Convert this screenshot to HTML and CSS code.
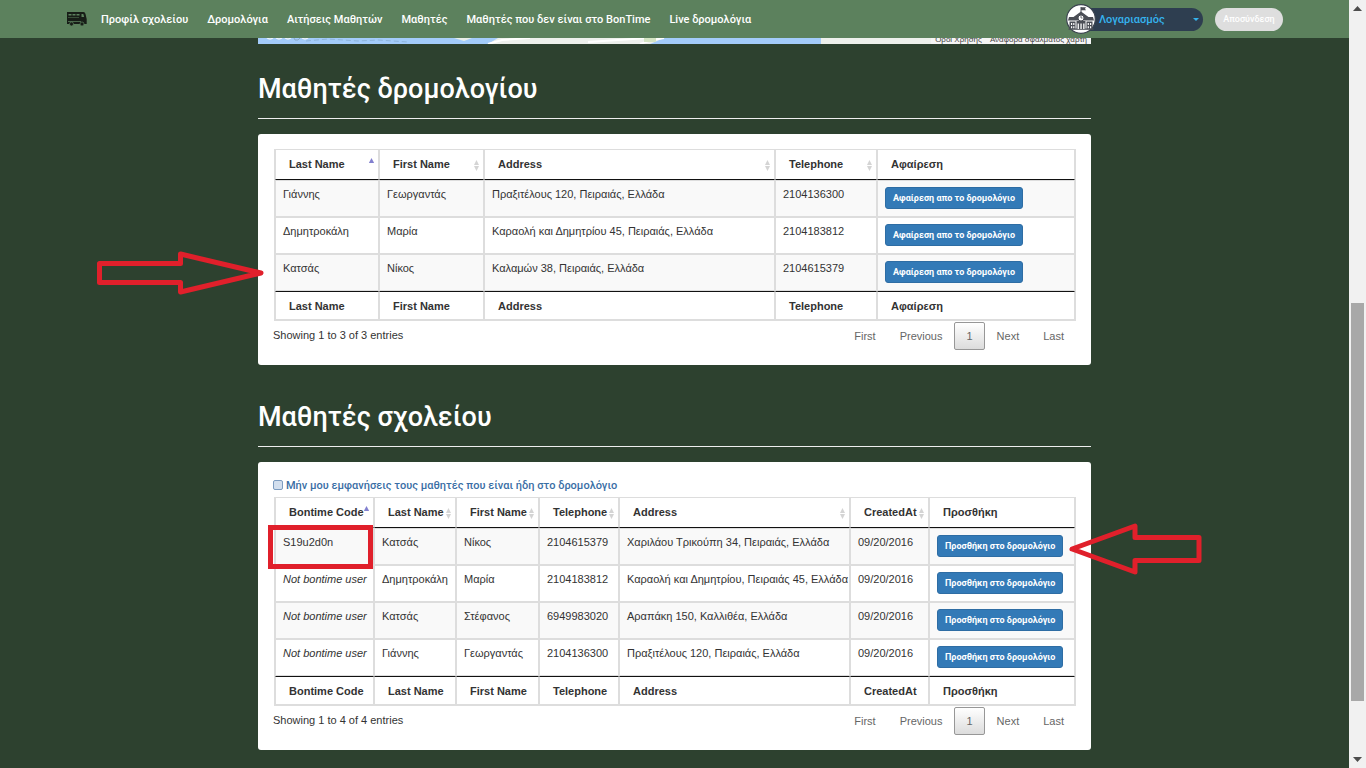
FILE: index.html
```
<!DOCTYPE html>
<html lang="el">
<head>
<meta charset="utf-8">
<title>BonTime</title>
<link rel="stylesheet" href="styles.css">
</head>
<body>
<svg class="defs" aria-hidden="true">
  <symbol id="both" viewBox="0 0 5 11"><path d="M2.500 0 5 5H0zM2.500 11 0 6h5z" fill="#d4d4d4"/></symbol>
  <symbol id="asc" viewBox="0 0 5 11"><path d="M2.500 1 5.200 6H-.2z" fill="#8280cf"/></symbol>
</svg>

<div class="window">
  <div class="page">
    <nav class="navbar">
      <a class="brand" href="#" aria-label="BonTime">
        <svg width="22" height="16" viewBox="0 0 22 16">
          <path d="M1 1h16.500q1.500 0 2 2l1.200 5v5H1z" fill="#171d17"/>
          <path d="M2.500 3h3v1.500h-3zM6.500 3h3v1.500h-3zM10.500 3h3v1.500h-3zM15.500 3h1.800l.9 3h-2.700zM2 6.500h11v.6H2zM2 10h13v.8H2z" fill="#5c815d"/>
          <circle cx="5.500" cy="13" r="2" fill="#171d17" stroke="#5c815d" stroke-width=".7"/>
          <circle cx="16" cy="13" r="2" fill="#171d17" stroke="#5c815d" stroke-width=".7"/>
        </svg>
      </a>
      <a href="#">Προφίλ σχολείου</a>
      <a href="#">Δρομολόγια</a>
      <a href="#">Αιτήσεις Μαθητών</a>
      <a href="#">Μαθητές</a>
      <a href="#">Μαθητές που δεν είναι στο BonTime</a>
      <a href="#">Live δρομολόγια</a>
      <div class="account">
        <button class="profile" type="button">
          <svg class="avatar" width="30" height="30" viewBox="0 0 30 30">
            <circle cx="15" cy="15" r="14.300" fill="#fff" stroke="#3c4450" stroke-width="1.200"/>
            <g fill="#4b4e56">
              <path d="M14.500 3h1v6h-1zM15.500 3.200h4.500l-1 1.500 1 1.500h-4.500z"/>
              <path d="M15 7.500 22.500 13H27l1 3.500H2L3 13h4.500z"/>
              <path d="M3.500 17.500h6V25h-6zM20.500 17.500h6V25h-6zM10.500 17h9v8h-9z"/>
              <path d="M2.500 24.500h25v1.300h-25z"/>
            </g>
            <circle cx="15" cy="14" r="3" fill="#fff" stroke="#4b4e56"/>
            <path d="M15 12v2h1.500" fill="none" stroke="#4b4e56" stroke-width=".8"/>
            <path d="M5 19h1.200v2H5zM7.200 19h1.200v2H7.200zM5 22.200h1.200v2H5zM7.200 22.200h1.200v2H7.200zM21.700 19h1.200v2h-1.200zM24 19h1.200v2H24zM21.700 22.200h1.200v2h-1.200zM24 22.200h1.200v2H24zM11.600 19.500h1.300V25h-1.300zM14.400 19.500h1.300V25h-1.300zM17.200 19.500h1.300V25h-1.300z" fill="#fff"/>
          </svg>
          <span>Λογαριασμός</span>
          <svg class="caret" width="6" height="3" viewBox="0 0 6 3"><path d="M0 0h6L3 3z" fill="#35b3ee"/></svg>
        </button>
        <button class="logout" type="button">Αποσύνδεση</button>
      </div>
    </nav>

    <main class="content">
      <div class="map">
        <svg class="map-tiles" viewBox="0 0 833 6" preserveAspectRatio="none" aria-hidden="true">
          <path d="M0 0h833v6H0z" fill="#a3ccfa"/>
          <path d="M240 0h166l-14 6H230zM563 0h270v6H563z" fill="#edf0ec"/>
          <path d="M196 0h18l-8 3z" fill="#e9efe9"/>
          <path d="M230 6l14-4 28-2M330 4l60-4M382 6l12-4 12-2" fill="none" stroke="#fff" stroke-width="2"/>
          <path d="M386 0h12v4h-12z" fill="#d4e4c3"/>
          <path d="M9 0q3 2 6 0M18 0q3 2 6 0M27 0q3 2 6 0M44 0q3 2 6 0" fill="none" stroke="#eef5fd" stroke-width="1.500"/>
          <path d="M36 0q0 3 4 2l2-2" fill="none" stroke="#8aa7c8"/>
          <path d="M48 3l22-2 30 2 20-1 30 2" fill="none" stroke="#8db4dc" stroke-dasharray="5 3"/>
        </svg>
        <div class="map-links"><a href="#">Όροι Χρήσης</a><a href="#">Αναφορά σφάλματος χάρτη</a></div>
      </div>

      <section>
        <h2>Μαθητές δρομολογίου</h2>
        <div class="card">
          <table class="grid">
            <colgroup><col style="width:13%"><col style="width:13.125%"><col style="width:36.375%"><col style="width:12.75%"><col></colgroup>
            <thead><tr>
              <th><button type="button">Last Name<svg class="asc"><use href="#asc"/></svg></button></th>
              <th><button type="button">First Name<svg><use href="#both"/></svg></button></th>
              <th><button type="button">Address<svg><use href="#both"/></svg></button></th>
              <th><button type="button">Telephone<svg><use href="#both"/></svg></button></th>
              <th>Αφαίρεση</th>
            </tr></thead>
            <tbody>
              <tr><td>Γιάννης</td><td>Γεωργαντάς</td><td>Πραξιτέλους 120, Πειραιάς, Ελλάδα</td><td>2104136300</td><td><button class="btn" type="button">Αφαίρεση απο το δρομολόγιο</button></td></tr>
              <tr><td>Δημητροκάλη</td><td>Μαρία</td><td>Καραολή και Δημητρίου 45, Πειραιάς, Ελλάδα</td><td>2104183812</td><td><button class="btn" type="button">Αφαίρεση απο το δρομολόγιο</button></td></tr>
              <tr><td>Κατσάς</td><td>Νίκος</td><td>Καλαμών 38, Πειραιάς, Ελλάδα</td><td>2104615379</td><td><button class="btn" type="button">Αφαίρεση απο το δρομολόγιο</button></td></tr>
            </tbody>
            <tfoot><tr><th>Last Name</th><th>First Name</th><th>Address</th><th>Telephone</th><th>Αφαίρεση</th></tr></tfoot>
          </table>
          <div class="table-foot">
            <p>Showing 1 to 3 of 3 entries</p>
            <div class="pager"><button type="button">First</button><button type="button">Previous</button><button class="current" type="button">1</button><button type="button">Next</button><button type="button">Last</button></div>
          </div>
          <svg class="arrow arrow-right" width="172" height="46" viewBox="0 0 172 46" aria-hidden="true"><path d="M4.500 13.500h81V4L166 23 85.500 42v-9.500h-81z"/></svg>
        </div>
      </section>

      <section>
        <h2>Μαθητές σχολείου</h2>
        <div class="card">
          <label class="filter"><input type="checkbox">Μήν μου εμφανήσεις τους μαθητές που είναι ήδη στο δρομολόγιο</label>
          <table class="grid">
            <colgroup><col style="width:12.375%"><col style="width:10.25%"><col style="width:10.375%"><col style="width:10%"><col style="width:28.875%"><col style="width:9.875%"><col></colgroup>
            <thead><tr>
              <th><button type="button">Bontime Code<svg class="asc"><use href="#asc"/></svg></button></th>
              <th><button type="button">Last Name<svg><use href="#both"/></svg></button></th>
              <th><button type="button">First Name<svg><use href="#both"/></svg></button></th>
              <th><button type="button">Telephone<svg><use href="#both"/></svg></button></th>
              <th><button type="button">Address<svg><use href="#both"/></svg></button></th>
              <th><button type="button">CreatedAt<svg><use href="#both"/></svg></button></th>
              <th>Προσθήκη</th>
            </tr></thead>
            <tbody>
              <tr><td class="marked">S19u2d0n</td><td>Κατσάς</td><td>Νίκος</td><td>2104615379</td><td>Χαριλάου Τρικούπη 34, Πειραιάς, Ελλάδα</td><td>09/20/2016</td><td><button class="btn" type="button">Προσθήκη στο δρομολόγιο</button></td></tr>
              <tr><td><em>Not bontime user</em></td><td>Δημητροκάλη</td><td>Μαρία</td><td>2104183812</td><td>Καραολή και Δημητρίου, Πειραιάς 45, Ελλάδα</td><td>09/20/2016</td><td><button class="btn" type="button">Προσθήκη στο δρομολόγιο</button></td></tr>
              <tr><td><em>Not bontime user</em></td><td>Κατσάς</td><td>Στέφανος</td><td>6949983020</td><td>Αραπάκη 150, Καλλιθέα, Ελλάδα</td><td>09/20/2016</td><td><button class="btn" type="button">Προσθήκη στο δρομολόγιο</button></td></tr>
              <tr><td><em>Not bontime user</em></td><td>Γιάννης</td><td>Γεωργαντάς</td><td>2104136300</td><td>Πραξιτέλους 120, Πειραιάς, Ελλάδα</td><td>09/20/2016</td><td><button class="btn" type="button">Προσθήκη στο δρομολόγιο</button></td></tr>
            </tbody>
            <tfoot><tr><th>Bontime Code</th><th>Last Name</th><th>First Name</th><th>Telephone</th><th>Address</th><th>CreatedAt</th><th>Προσθήκη</th></tr></tfoot>
          </table>
          <div class="table-foot">
            <p>Showing 1 to 4 of 4 entries</p>
            <div class="pager"><button type="button">First</button><button type="button">Previous</button><button class="current" type="button">1</button><button type="button">Next</button><button type="button">Last</button></div>
          </div>
          <svg class="arrow arrow-left" width="136" height="54" viewBox="0 0 136 54" aria-hidden="true"><path d="M5 27 68 4v11.500h64v23H68V50z"/></svg>
        </div>
      </section>
    </main>
  </div>

  <div class="scrollbar" aria-hidden="true">
    <svg width="9" height="5" viewBox="0 0 9 5"><path d="M4.500 0 9 5H0z" fill="#4d4d4d"/></svg>
    <div class="track"><div class="before"></div><div class="thumb"></div><div class="after"></div></div>
    <svg width="9" height="5" viewBox="0 0 9 5"><path d="M0 0h9L4.500 5z" fill="#4d4d4d"/></svg>
  </div>
</div>
</body>
</html>
```
FILE: styles.css
```
* { box-sizing: border-box; }
body {
  margin: 0;
  background: #2d412f;
  color: #333;
  font: 11px/15px "Liberation Sans", Arial, sans-serif;
}
button { font: inherit; color: inherit; margin: 0; cursor: pointer; }
.defs { position: absolute; width: 0; height: 0; }

.window { display: flex; height: 100vh; overflow: hidden; }
.page { flex: 1; min-width: 0; }

/* navigation */
.navbar {
  display: flex;
  align-items: center;
  gap: 19px;
  height: 38px;
  padding: 0 66px;
  background: #5c815d;
  color: #fff;
  font: 500 11px/15px Roboto, sans-serif;
  white-space: nowrap;
}
.navbar a { color: #fff; text-decoration: none; }
.navbar .brand { display: flex; margin-right: -6px; }
.account { display: flex; align-items: center; gap: 12px; margin-left: auto; }
.profile {
  display: flex;
  align-items: center;
  width: 136px;
  height: 23px;
  padding: 0 4px 0 0;
  border: 0;
  border-radius: 12px;
  background: #2e3e50;
  color: #35b3ee;
}
.avatar { flex: none; margin: -4px 3px -4px -1px; }
.caret { margin-left: auto; }
.logout {
  width: 68px;
  height: 23px;
  padding: 0;
  border: 0;
  border-radius: 12px;
  background: #dedede;
  color: #fff;
  font-size: 9px;
}

/* content */
.content { width: 100%; max-width: 833px; margin: 0 auto; }
.map {
  display: flex;
  justify-content: flex-end;
  position: relative;
  height: 6px;
  margin-bottom: 31px;
  overflow: hidden;
}
.map-tiles { position: absolute; inset: 0; width: 100%; height: 100%; }
.map-links {
  display: flex;
  align-items: flex-end;
  gap: 8px;
  height: 6px;
  padding: 0 4px;
  background: #f5f5f5;
  position: relative;
  font: 8px/9px "Liberation Sans", Arial, sans-serif;
}
.map-links a { color: #444; text-decoration: none; }
h2 {
  margin: 0 0 15px;
  padding-bottom: 14px;
  border-bottom: 1px solid #eee;
  color: #fff;
  font: 500 27px/29px Roboto, sans-serif;
}
.card {
  position: relative;
  margin-bottom: 38px;
  padding: 15px;
  border-radius: 3px;
  background: #fff;
}
.filter {
  display: flex;
  align-items: center;
  gap: 3px;
  height: 20px;
  padding-bottom: 4px;
  color: #3a6ea5;
  font: 500 11px/15px Roboto, sans-serif;
}
.filter input {
  appearance: none;
  width: 10px;
  height: 10px;
  margin: 0;
  border: 1px solid #7d9cc0;
  border-radius: 2px;
  background: #d3dfee;
}

/* tables */
.grid {
  width: calc(100% - 1px);
  margin-left: 1px;
  table-layout: fixed;
  border-collapse: separate;
  border-spacing: 0;
  border: 1px solid #ddd;
  border-top: 0;
}
.grid th, .grid td {
  padding: 6px 7px;
  border: 1px solid #ddd;
  text-align: left;
  vertical-align: top;
  white-space: nowrap;
}
.grid th { padding: 7px 4px 7px 13px; color: #333; font-weight: 700; }
.grid thead th { border-bottom-color: #111; }
.grid tfoot th { padding-bottom: 5px; border-top-color: #111; }
.grid td { height: 37px; }
.grid tbody tr:nth-child(odd) { background: #f9f9f9; }
.grid th button {
  display: flex;
  justify-content: space-between;
  width: 100%;
  padding: 0;
  border: 0;
  background: none;
}
.grid svg { flex: none; width: 5px; height: 11px; margin-top: 3px; }
.grid .asc { margin-top: 0; }
.btn {
  display: block;
  height: 22px;
  padding: 0 7px;
  border: 1px solid #2e6da4;
  border-radius: 3px;
  background: #337ab7;
  color: #fff;
  font: 700 9px/20px Roboto, sans-serif;
}
.marked { position: relative; }
.marked::after {
  content: "";
  position: absolute;
  inset: -4px 0 -5px -8px;
  border: 5px solid #e0202b;
}
.table-foot { display: flex; justify-content: space-between; padding-top: 1px; }
.table-foot p { margin: 6px 0 0; }
.pager { display: flex; }
.pager button {
  height: 28px;
  padding: 0 11px;
  border: 1px solid transparent;
  border-radius: 2px;
  background: none;
  color: #666;
}
.pager .current {
  border-color: #979797;
  background: linear-gradient(#fff, #dcdcdc);
}

/* callouts */
.arrow { position: absolute; pointer-events: none; }
.arrow path { fill: none; stroke: #e0202b; stroke-width: 5; stroke-linejoin: round; }
.arrow-right { right: 824px; top: 116px; }
.arrow-left { left: 809px; top: 60px; }

/* scrollbar */
.scrollbar {
  display: flex;
  flex-direction: column;
  align-items: center;
  width: 17px;
  padding: 6px 0;
  background: #f1f1f1;
}
.track { display: flex; flex: 1; flex-direction: column; width: 13px; margin: 6px 0; }
.before { flex: 286; }
.thumb { flex: 398; background: #a8a8a8; }
.after { flex: 50; }
```
